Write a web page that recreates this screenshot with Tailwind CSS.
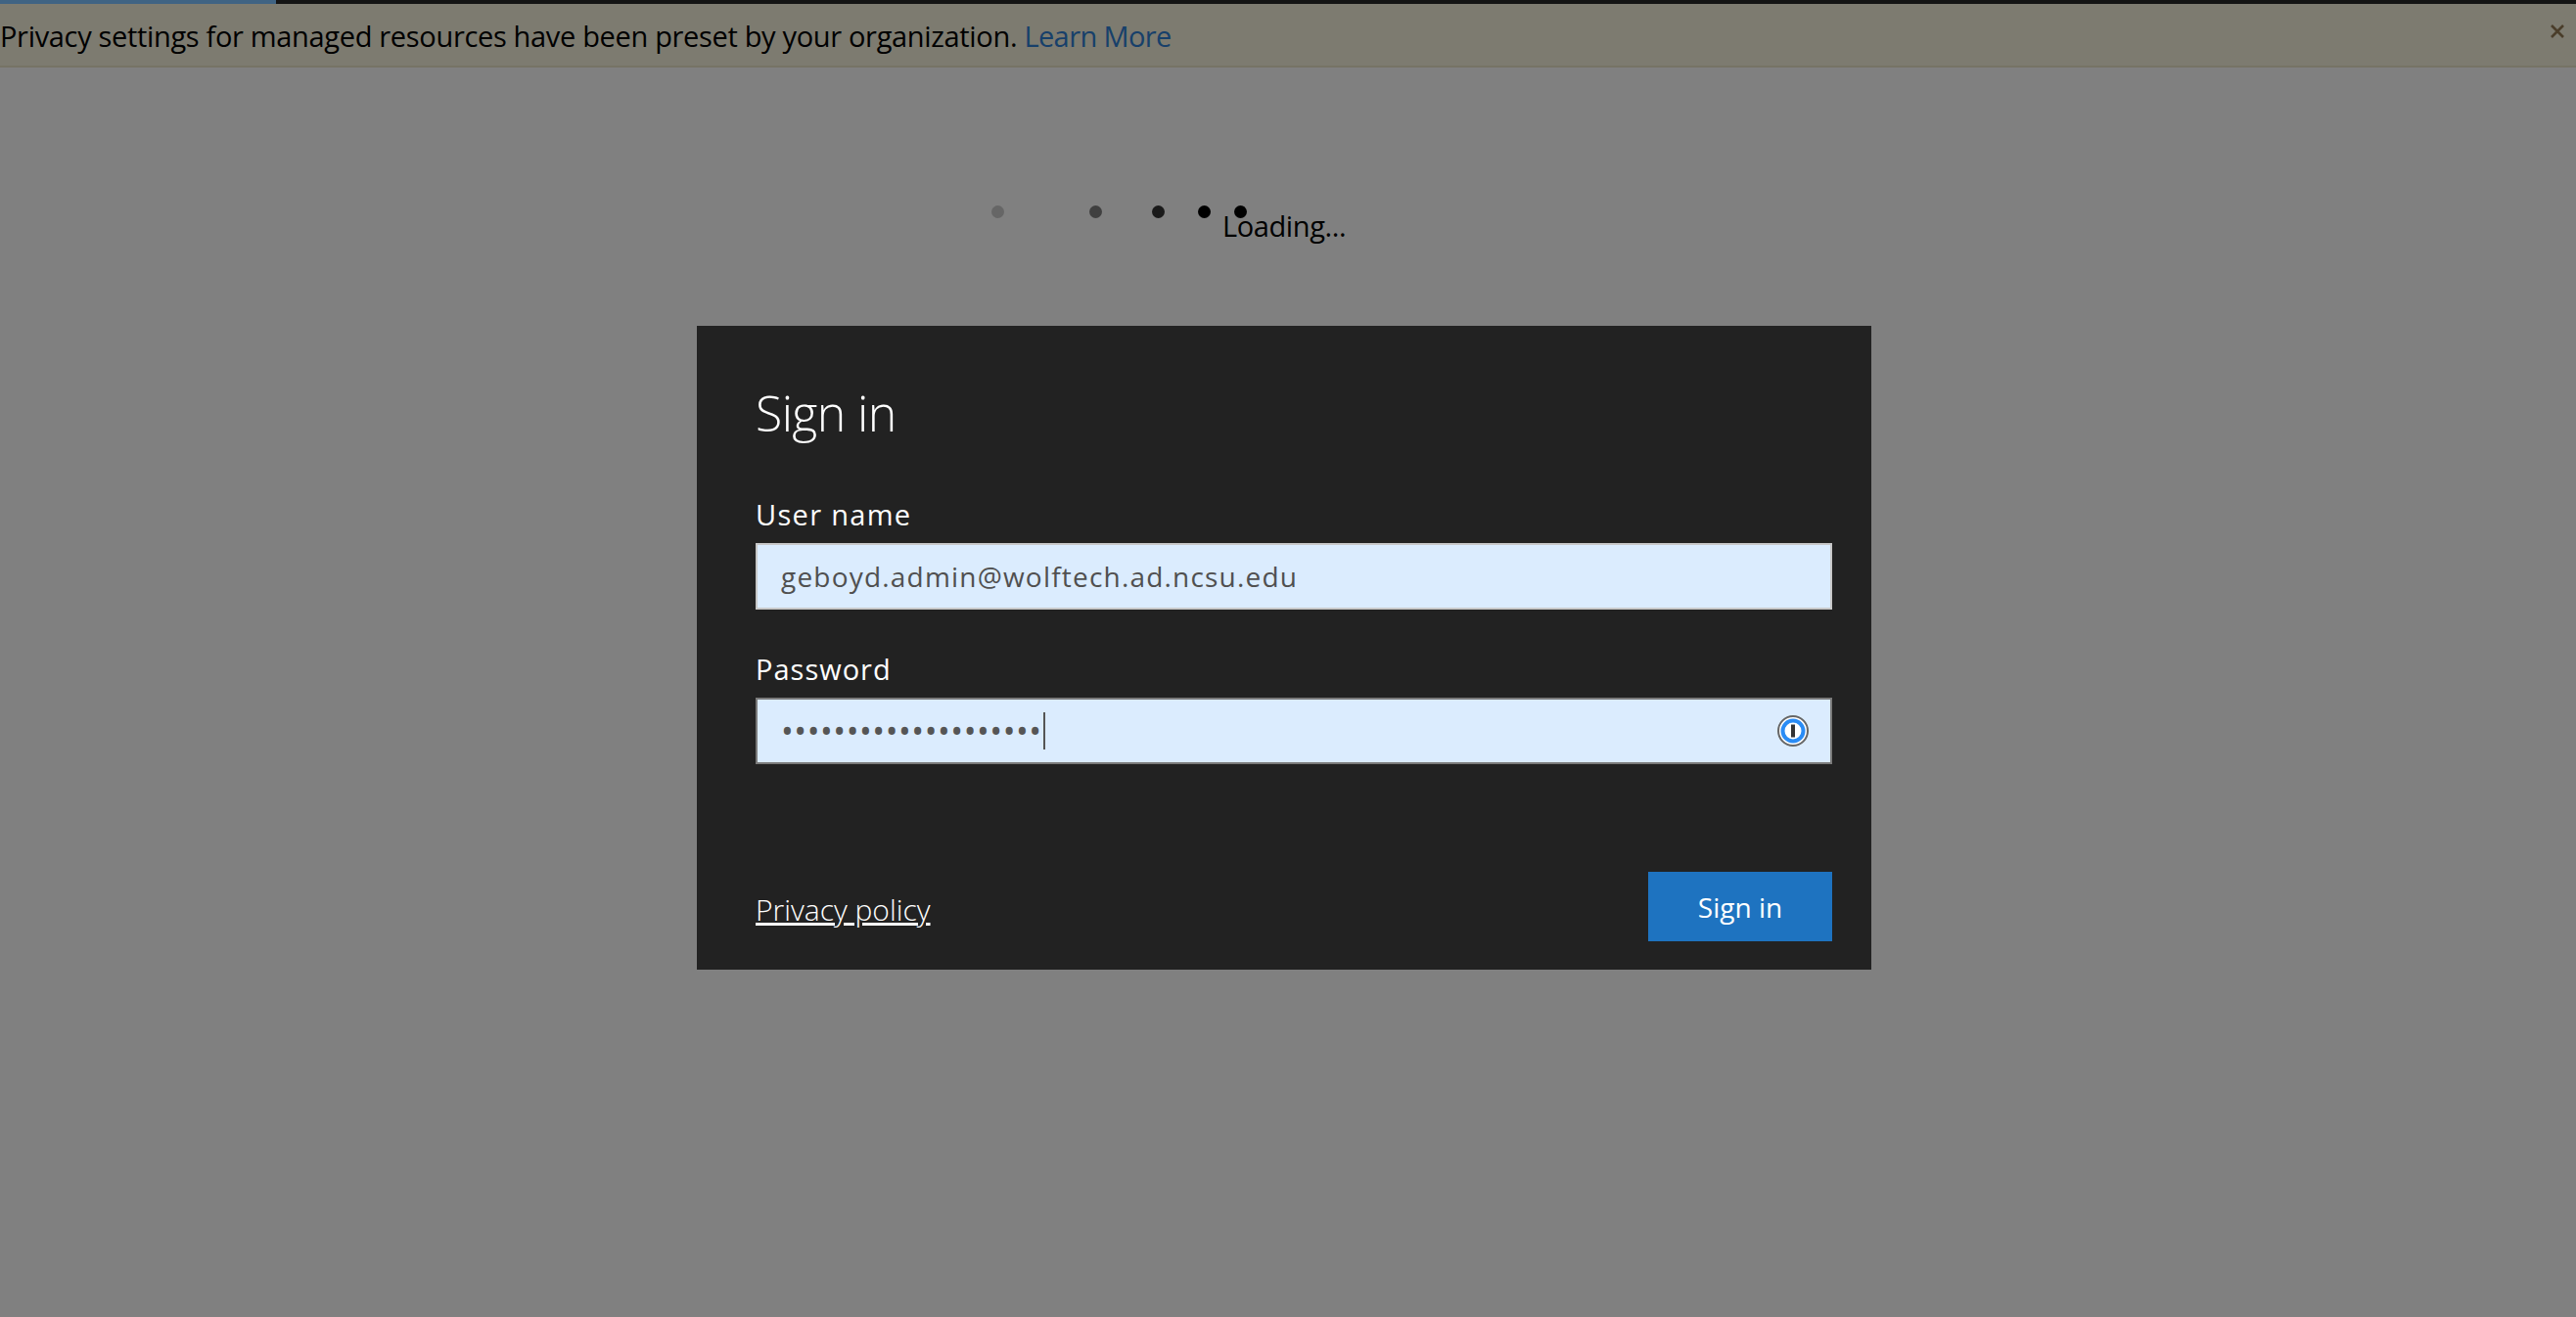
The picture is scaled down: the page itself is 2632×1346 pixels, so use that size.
<!DOCTYPE html>
<html lang="en">
  <head>
    <meta charset="UTF-8" />
    <title>Sign in</title>
    <script src="https://cdn.jsdelivr.net/npm/@tailwindcss/browser@4"></script>
  </head>
  <body class="h-[1346px] w-full overflow-hidden bg-[#808080] font-['Open_Sans','Noto_Sans',sans-serif] text-black">
    <!-- progress bar -->
    <div class="h-1 w-full bg-[#141414]">
      <div class="h-1 w-[282px] bg-[#3f6383]"></div>
    </div>

    <!-- org notice -->
    <div class="relative flex h-[65px] items-center border-b-2 border-[#767365] bg-[#7d7b70]">
      <p class="mt-[2px] text-[29px] leading-none tracking-[-0.33px]">
        Privacy settings for managed resources have been preset by your organization.
        <a href="#" class="tracking-[-0.6px] text-[#17406a]">Learn More</a>
      </p>
      <svg class="absolute right-[12px] top-[21px] h-[14px] w-[14px]" viewBox="0 0 14 14" fill="none" stroke="#4a3d2a" stroke-width="2.6">
        <path d="M1 1l12 12M13 1L1 13" />
      </svg>
    </div>

    <!-- loading dots -->
    <div class="relative h-[264px]">
      <span class="absolute left-[1013px] top-[141px] h-[13px] w-[13px] rounded-full bg-[#666]"></span>
      <span class="absolute left-[1113px] top-[141px] h-[13px] w-[13px] rounded-full bg-[#404040]"></span>
      <span class="absolute left-[1177px] top-[141px] h-[13px] w-[13px] rounded-full bg-[#1a1a1a]"></span>
      <span class="absolute left-[1224px] top-[141px] h-[13px] w-[13px] rounded-full bg-black"></span>
      <span class="absolute left-[1261px] top-[141px] h-[13px] w-[13px] rounded-full bg-black"></span>
      <span class="absolute left-[1249px] top-[142px] text-[29px] leading-[40px] tracking-[-0.4px]">Loading...</span>
    </div>

    <!-- sign in dialog -->
    <div class="ml-[712px] flex h-[658px] w-[1200px] flex-col bg-[#222222] pl-[60px] pr-10 text-white">
      <h1 class="mt-[59px] text-[50px] font-[350] leading-[60px] tracking-[-0.6px]">Sign in</h1>

      <label class="mt-[54px] text-[29px] leading-[40px] tracking-[1.3px]">User name</label>
      <div class="mt-[9px] flex h-[68px] items-center border-2 border-[#c8c8c8] bg-[#dbecfe] pl-6 text-[28px] tracking-[1.2px] text-[#505050]">
        geboyd.admin@wolftech.ad.ncsu.edu
      </div>

      <label class="mt-[41px] text-[29px] leading-[40px] tracking-[1px]">Password</label>
      <div class="mt-[9px] flex h-[68px] items-center border-2 border-[#7a7a7a] bg-[#dbecfe] pl-6 pr-[22px] text-[#555]">
        <span class="text-[34px] leading-none tracking-[0.55px]">••••••••••••••••••••</span>
        <span class="ml-[1px] h-[38px] w-[2px] bg-[#555]"></span>
        <svg class="ml-auto h-8 w-8" viewBox="0 0 32 32">
          <circle cx="16" cy="16" r="15" fill="#fff" stroke="#666" stroke-width="2" />
          <circle cx="16" cy="16" r="10.5" fill="#fff" stroke="#2a8cf5" stroke-width="4" />
          <rect x="14" y="9.5" width="4" height="13" fill="#333" />
        </svg>
      </div>

      <div class="mt-auto mb-[29px] flex items-end justify-between">
        <a href="#" class="mb-[12px] text-[30px] font-[350] leading-[40px] underline">Privacy policy</a>
        <button class="flex h-[71px] w-[188px] items-center justify-center bg-[#1e73c0] text-[28px]">Sign in</button>
      </div>
    </div>
  </body>
</html>
